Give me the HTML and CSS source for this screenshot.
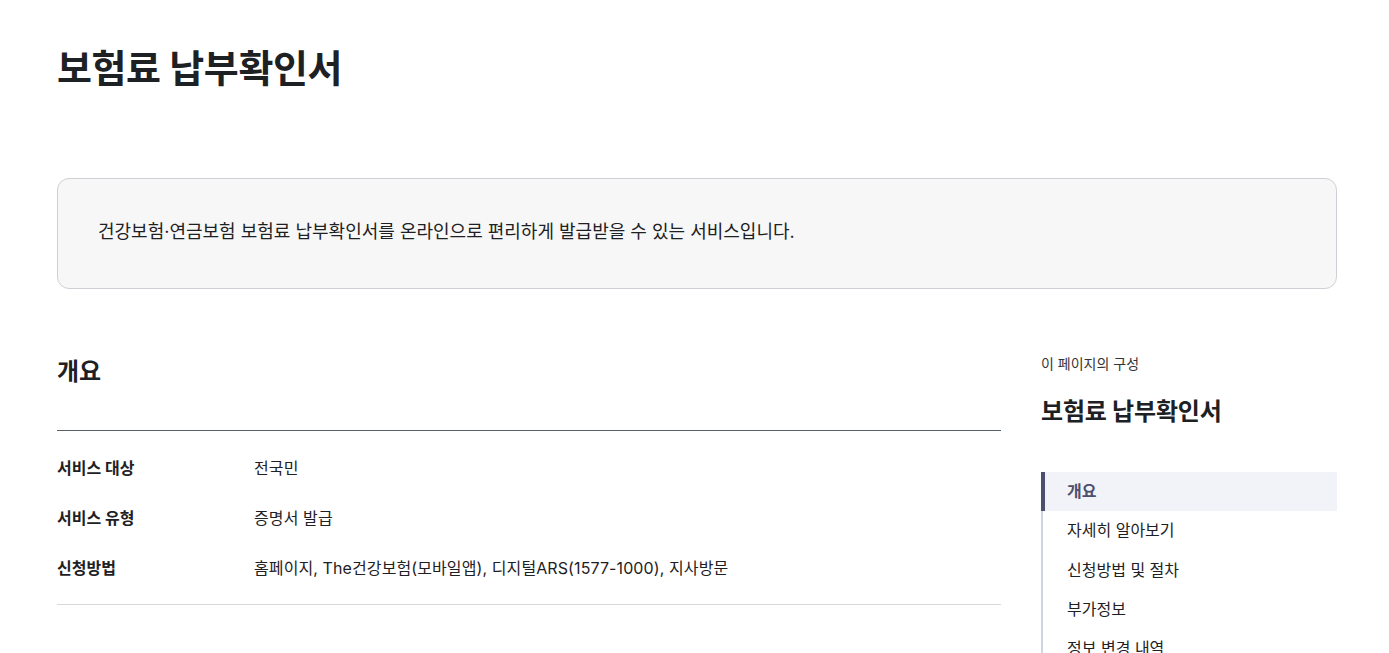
FILE: index.html
```html
<!DOCTYPE html>
<html lang="ko">
<head>
    <meta charset="UTF-8">
    <meta name="viewport" content="width=device-width, initial-scale=1.0">
    <title>보험료 납부확인서</title>
    <link rel="stylesheet" href="styles.css">
</head>
<body>

    <div class="page">
        <h1 class="page-title">보험료 납부확인서</h1>

        <!-- Service summary -->
        <div class="summary-box">
            <p>건강보험·연금보험 보험료 납부확인서를 온라인으로 편리하게 발급받을 수 있는 서비스입니다.</p>
        </div>

        <div class="content-wrap">
            <div class="main-col">
                <section class="section">
                    <h2 class="section-title">개요</h2>
                    <dl class="info-list">
                        <div class="info-row">
                            <dt>서비스 대상</dt>
                            <dd>전국민</dd>
                        </div>
                        <div class="info-row">
                            <dt>서비스 유형</dt>
                            <dd>증명서 발급</dd>
                        </div>
                        <div class="info-row">
                            <dt>신청방법</dt>
                            <dd>홈페이지, The건강보험(모바일앱), 디지털ARS(1577-1000), 지사방문</dd>
                        </div>
                    </dl>
                </section>
            </div>

            <!-- In-page navigation -->
            <aside class="side-nav">
                <p class="side-label">이 페이지의 구성</p>
                <h3 class="side-title">보험료 납부확인서</h3>
                <ul class="side-menu">
                    <li class="active"><a href="#">개요</a></li>
                    <li><a href="#">자세히 알아보기</a></li>
                    <li><a href="#">신청방법 및 절차</a></li>
                    <li><a href="#">부가정보</a></li>
                    <li><a href="#">정보 변경 내역</a></li>
                </ul>
            </aside>
        </div>
    </div>

</body>
</html>
```

FILE: styles.css
```css
/* Service detail page */
body {
    margin: 0;
    font-family: 'Inter', 'Noto Sans CJK KR', sans-serif;
    color: #1e2124;
    background: #fff;
}

.page {
    width: 1280px;
    padding: 40px 0 0 57px;
}

.page-title {
    margin: 0;
    font-size: 38px;
    font-weight: 700;
    line-height: 56px;
    letter-spacing: -0.4px;
}

/* Summary box */
.summary-box {
    margin-top: 82px;
    background-color: #f7f7f7;
    border: 1px solid #cdd1d5;
    border-radius: 12px;
    padding: 38px 40px 42px;
    height: 29px;
}

.summary-box p {
    margin: 0;
    font-size: 18px;
    line-height: 29px;
}

/* Two columns */
.content-wrap {
    display: flex;
    gap: 40px;
    margin-top: 56px;
}

.main-col {
    width: 944px;
}

.section-title {
    margin: 0;
    padding: 11px 0 42px;
    font-size: 24px;
    line-height: 32px;
    font-weight: 700;
    border-bottom: 1px solid #58616a;
}

.info-list {
    margin: 0;
    padding: 11px 0 12px;
    border-bottom: 1px solid #d6d9dc;
}

.info-row {
    display: flex;
    height: 50px;
    align-items: center;
    font-size: 16px;
}

.info-row dt {
    width: 197px;
    font-weight: 700;
}

.info-row dd {
    margin: 0;
    letter-spacing: 0.1px;
}

/* Side navigation */
.side-nav {
    width: 296px;
}

.side-label {
    margin: 0;
    padding-top: 9px;
    font-size: 14px;
    line-height: 20px;
    color: #333;
}

.side-title {
    margin: 22px 0 0;
    font-size: 24px;
    line-height: 32px;
    font-weight: 700;
    letter-spacing: -0.2px;
}

.side-menu {
    list-style: none;
    margin: 44px 0 0;
    padding: 0;
    border-left: 2px solid #cdd6e2;
}

.side-menu li a {
    display: block;
    height: 39.3px;
    line-height: 39px;
    padding-left: 24px;
    font-size: 16px;
    color: #1e2124;
    text-decoration: none;
}

.side-menu li.active a {
    margin-left: -2px;
    padding-left: 22px;
    border-left: 4px solid #4c4f6e;
    background-color: #f2f3f8;
    color: #4c4f6e;
    font-weight: 700;
}
```
